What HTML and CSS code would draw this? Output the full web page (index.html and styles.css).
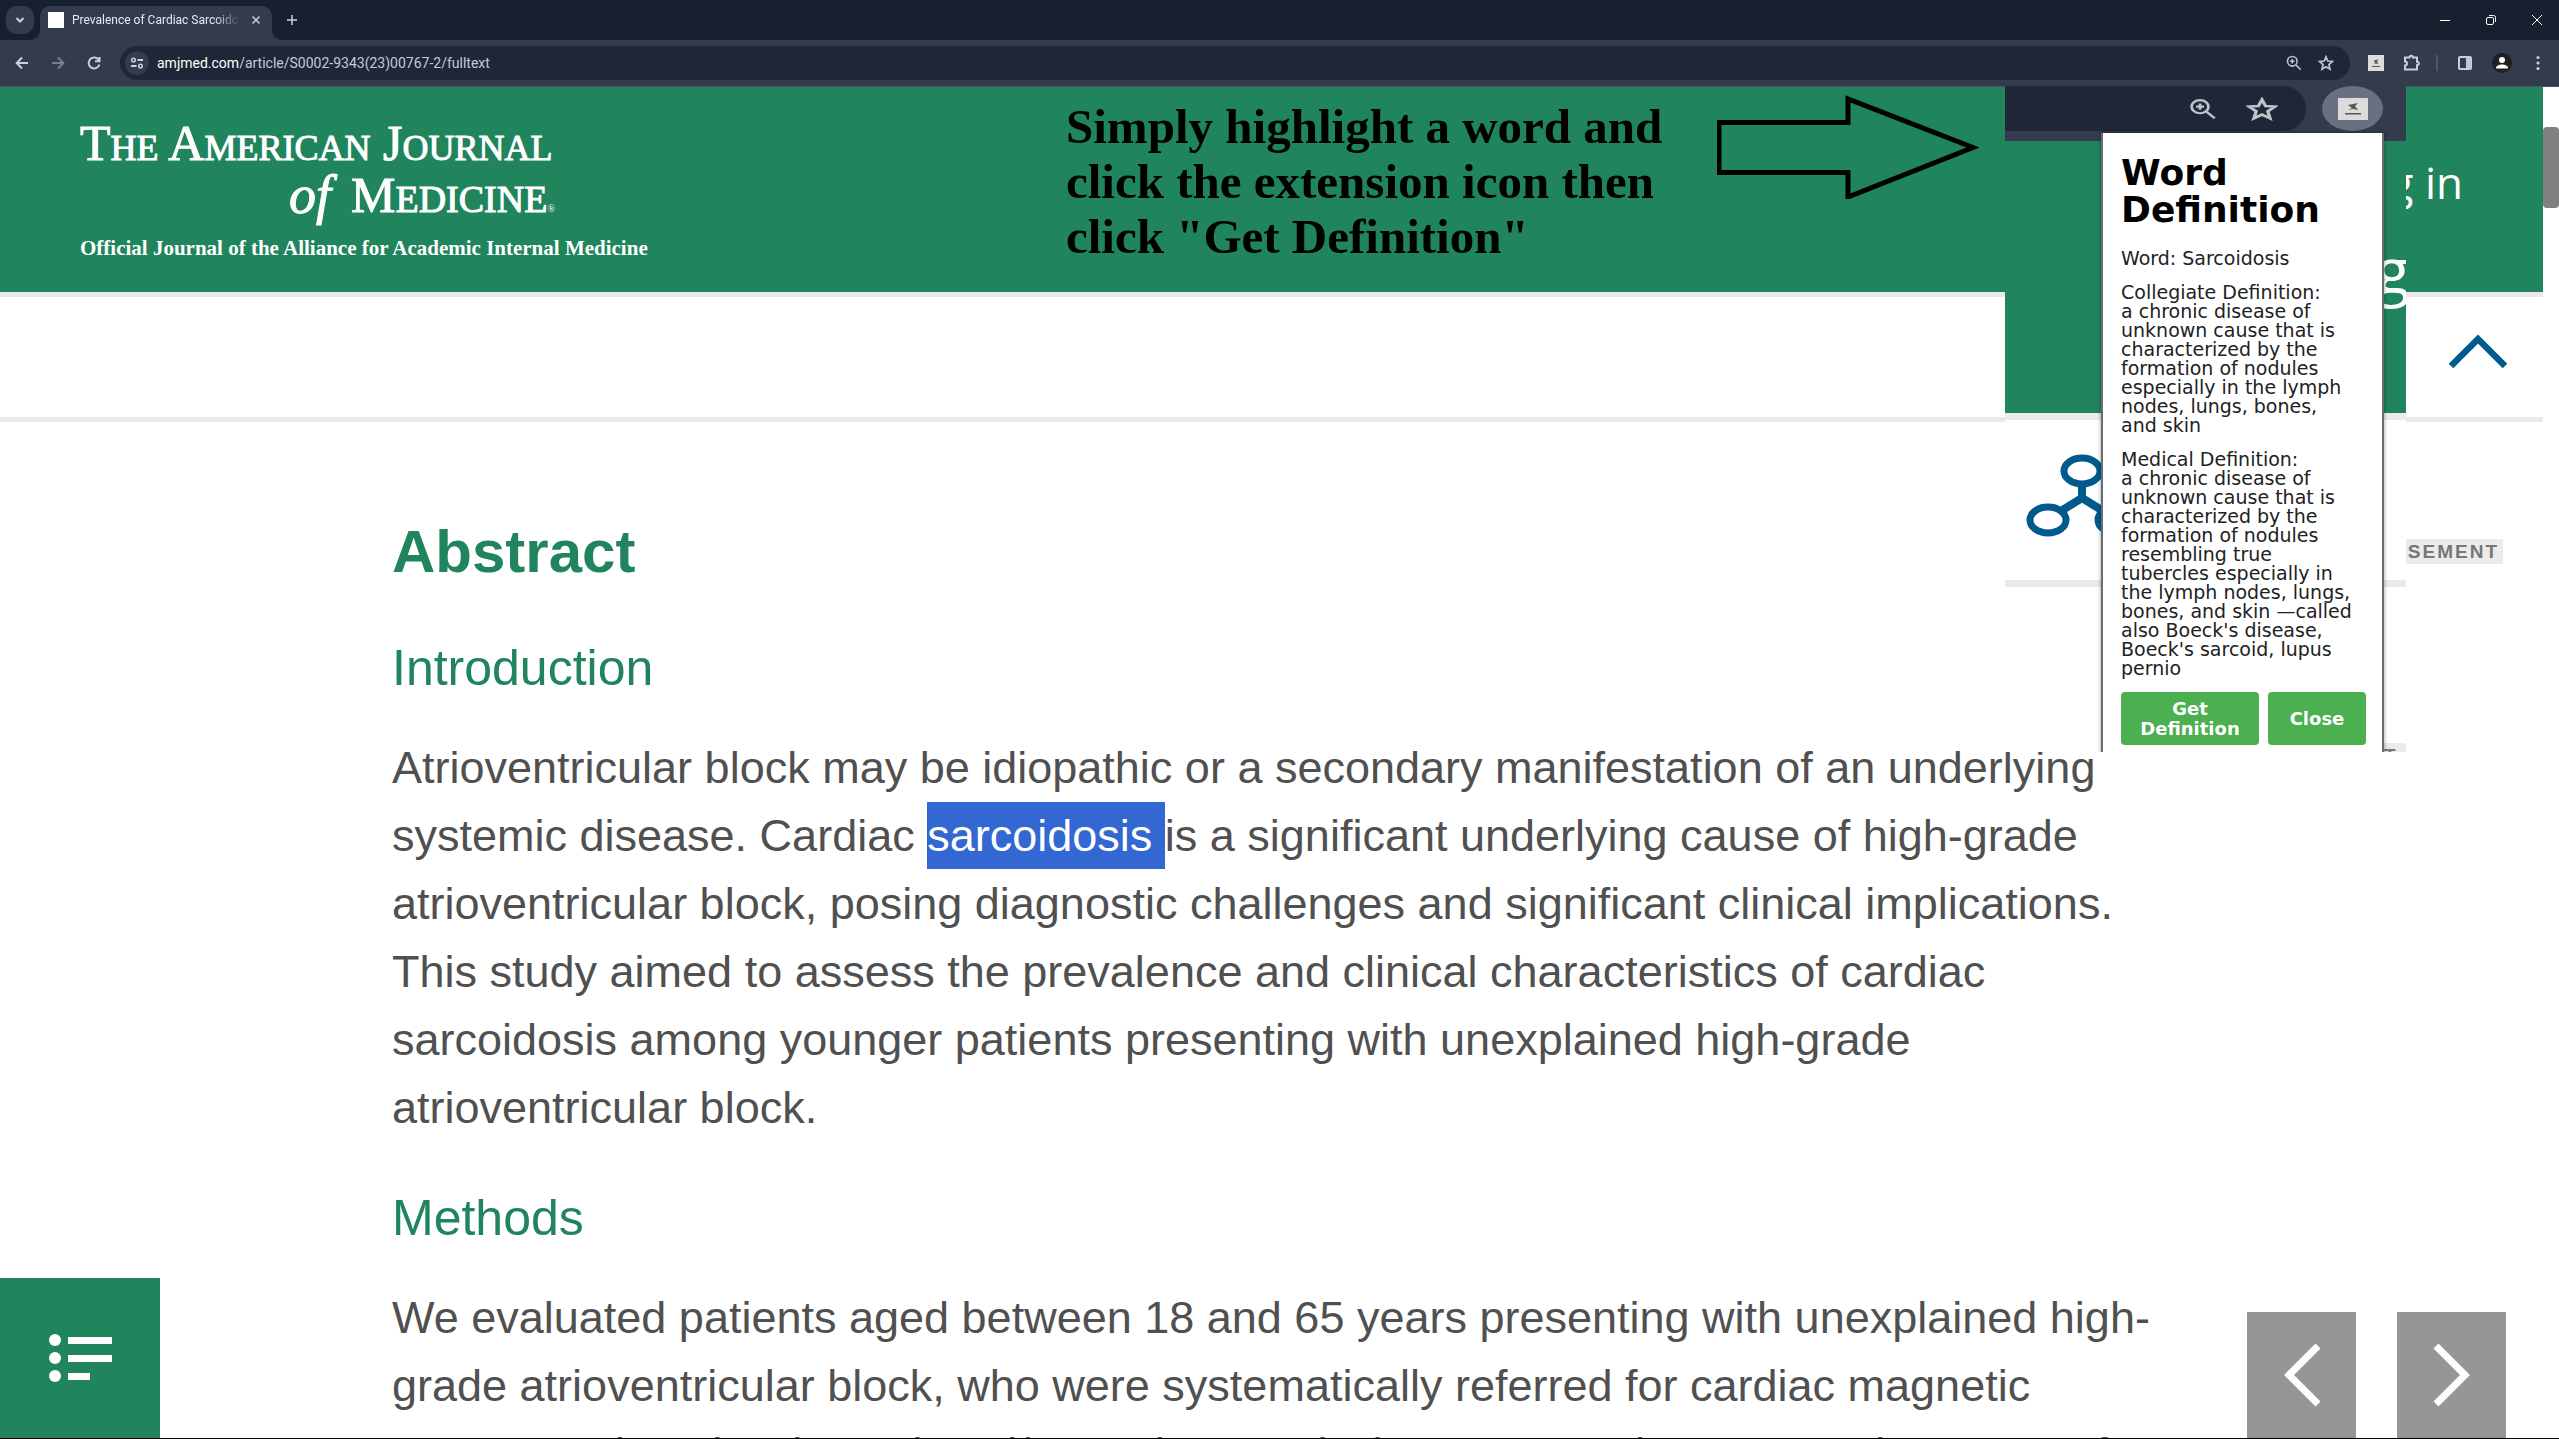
FILE: index.html
```html
<!DOCTYPE html>
<html lang="en">
<head>
<meta charset="utf-8">
<title>Prevalence of Cardiac Sarcoidosis</title>
<link rel="stylesheet" href="styles.css">
</head>
<body>
<div class="browser">
  <div class="tabstrip">
    <button class="tab-search" aria-label="Search tabs"><svg width="12" height="12" viewBox="0 0 12 12"><path d="M2.5 4 6 7.5 9.500 4" class="ln w2"/></svg></button>
    <div class="tab">
      <span class="favicon"></span>
      <span class="tab-title">Prevalence of Cardiac Sarcoidos</span>
      <button class="plain" aria-label="Close tab"><svg width="12" height="12" viewBox="0 0 12 12"><path d="M2.500 2.500l7 7M9.500 2.500l-7 7" class="ln"/></svg></button>
    </div>
    <button class="plain new-tab" aria-label="New tab"><svg width="12" height="12" viewBox="0 0 12 12"><path d="M6 1v10M1 6h10" class="ln"/></svg></button>
    <div class="window-controls">
      <button class="plain" aria-label="Minimize"><svg width="12" height="12" viewBox="0 0 12 12"><path d="M1 6.500h10" class="wn"/></svg></button>
      <button class="plain" aria-label="Restore"><svg width="12" height="12" viewBox="0 0 12 12"><rect x="1.500" y="3.500" width="7" height="7" rx="1.500" class="wn"/><path d="M4 1.500h4.500a2 2 0 0 1 2 2V8" class="wn"/></svg></button>
      <button class="plain" aria-label="Close window"><svg width="12" height="12" viewBox="0 0 12 12"><path d="M1 1l10 10M11 1 1 11" class="wn"/></svg></button>
    </div>
  </div>
  <div class="toolbar">
    <div class="nav-buttons">
      <button class="plain" aria-label="Back"><svg width="14" height="14" viewBox="0 0 14 14"><path d="M13 7H2M7 1.500 1.700 7 7 12.500" class="ln w2"/></svg></button>
      <button class="plain dim" aria-label="Forward"><svg width="14" height="14" viewBox="0 0 14 14"><path d="M1 7h11M7 1.500 12.300 7 7 12.500" class="ln w2"/></svg></button>
      <button class="plain" aria-label="Reload"><svg width="14" height="14" viewBox="0 0 14 14"><path d="M12 4.200A5.500 5.500 0 1 0 12.500 8.500M12.500 1v4.200H8" class="ln w2"/></svg></button>
    </div>
    <div class="omnibox">
      <button class="site-info" aria-label="Site information"><svg width="14" height="12" viewBox="0 0 14 12"><circle cx="3.500" cy="3" r="1.800" class="ln"/><path d="M7.500 3H13M1 9h5.500" class="ln w2"/><circle cx="10.500" cy="9" r="1.800" class="ln"/></svg></button>
      <span class="url"><b>amjmed.com</b>/article/S0002-9343(23)00767-2/fulltext</span>
      <button class="plain" aria-label="Zoom"><svg width="16" height="16" viewBox="0 0 16 16"><use href="#zoom"/></svg></button>
      <button class="plain" aria-label="Bookmark"><svg width="16" height="16" viewBox="0 0 16 16"><use href="#star"/></svg></button>
    </div>
    <div class="actions">
      <button class="plain" aria-label="Word Definition extension"><svg width="16" height="16" viewBox="0 0 16 16"><use href="#ext"/></svg></button>
      <button class="plain" aria-label="Extensions"><svg width="18" height="18" viewBox="0 0 18 18"><path d="M2 3.500h4.500a1.700 1.700 0 0 1 3.400 0H14v4.300a1.700 1.700 0 0 1 0 3.400V15.500H2v-4a2 2 0 0 0 0-4z" class="ln w2"/></svg></button>
      <i class="divider"></i>
      <button class="plain" aria-label="Side panel"><svg width="16" height="16" viewBox="0 0 16 16"><rect x="2" y="2" width="12" height="12" rx="1" class="ln w2"/><path d="M9 2h5v12H9z" fill="#bfc7df"/></svg></button>
      <button class="plain" aria-label="Profile"><svg width="20" height="20" viewBox="0 0 20 20"><circle cx="10" cy="10" r="10" fill="#1f1f1f"/><circle cx="10" cy="7" r="3" fill="#fff"/><path d="M4 15.500c0-3 3-4 6-4s6 1 6 4z" fill="#fff"/></svg></button>
      <button class="plain menu" aria-label="Menu"><svg width="6" height="16" viewBox="0 0 6 16" fill="#c9cfe0"><circle cx="3" cy="2.500" r="1.600"/><circle cx="3" cy="8" r="1.600"/><circle cx="3" cy="13.500" r="1.600"/></svg></button>
    </div>
  </div>

  <div class="viewport">
    <main class="page">
      <header class="masthead">
        <div class="brand">
          <div class="brand-line">T<small>HE</small> A<small>MERICAN</small> J<small>OURNAL</small></div>
          <div class="brand-line second"><em>of</em> <span>M<small>EDICINE</small><sup>®</sup></span></div>
          <div class="brand-sub">Official Journal of the Alliance for Academic Internal Medicine</div>
        </div>
        <p class="callout">Simply highlight a word and<br>click the extension icon then<br>click "Get Definition"</p>
        <svg class="arrow" width="262" height="104" viewBox="0 0 262 104"><path d="M2 27.500H131V4L256 52.500 131 102V77.500H2z" fill="none" stroke="#000" stroke-width="5"/></svg>
        <a class="login" href="#">g in</a>
      </header>
      <div class="subbar">
        <button class="plain" aria-label="Collapse"><svg width="60" height="36" viewBox="0 0 60 36"><path d="M3 33 30 6l27 27" fill="none" stroke="#005a8e" stroke-width="6.500"/></svg></button>
      </div>
      <article class="article">
        <h1>Abstract</h1>
        <h2>Introduction</h2>
        <p>Atrioventricular block may be idiopathic or a secondary manifestation of an underlying systemic disease. Cardiac <mark>sarcoidosis </mark>is a significant underlying cause of high-grade atrioventricular block, posing diagnostic challenges and significant clinical implications. This study aimed to assess the prevalence and clinical characteristics of cardiac sarcoidosis among younger patients presenting with unexplained high-grade atrioventricular block.</p>
        <h2>Methods</h2>
        <p>We evaluated patients aged between 18 and 65 years presenting with unexplained high-grade atrioventricular block, who were systematically referred for cardiac magnetic resonance imaging (CMRI) and/or positron emission tomography was used to screen for</p>
      </article>
      <span class="ad-label">SEMENT</span>
      <button class="outline-btn" aria-label="Article outline"><svg width="66" height="52" viewBox="0 0 66 52" fill="#fff"><circle cx="8" cy="8" r="6"/><circle cx="8" cy="26" r="6"/><circle cx="8" cy="44" r="6"/><path d="M21 5h44v7H21zM21 23h44v7H21zM21 41h22v7H21z"/></svg></button>
      <div class="pager">
        <button aria-label="Previous article"><svg width="38" height="64" viewBox="0 0 38 64"><path d="M35 3 6 32l29 29"/></svg></button>
        <button aria-label="Next article"><svg width="38" height="64" viewBox="0 0 38 64"><path d="M3 3l29 29L3 61"/></svg></button>
      </div>
    </main>
    <div class="scrollbar"><div class="thumb"></div></div>

    <section class="inset">
      <div class="inset-bar">
        <div class="inset-omni">
          <svg width="28" height="22" viewBox="0 0 16 16" preserveAspectRatio="none"><use href="#zoom"/></svg>
          <svg width="32" height="24" viewBox="0 0 16 16" preserveAspectRatio="none"><use href="#star"/></svg>
        </div>
        <div class="inset-ext"><svg width="30" height="22" viewBox="0 0 30 22"><path d="M0 0h30v22H0z" fill="#dcdcdc"/><path d="M10 7l5-1 5-1-3 3 3 4-5-1-5 1 4-2zM7 15h16v1.500H7z" fill="#555"/></svg></div>
      </div>
      <div class="inset-green"><span>g</span></div>
      <div class="inset-row">
        <svg width="120" height="90" viewBox="0 0 120 90" fill="none" stroke="#005a8e"><path d="M58 31v16M58 45 37 58M58 45l21 13" stroke-width="8"/><g stroke-width="7"><ellipse cx="58" cy="18" rx="18" ry="13" fill="#fff"/><ellipse cx="24" cy="67" rx="18" ry="13" fill="#fff"/><ellipse cx="92" cy="67" rx="18" ry="13" fill="#fff"/></g></svg>
      </div>
      <div class="inset-rest"><span>T</span></div>
      <div class="popup">
        <h3>Word Definition</h3>
        <p>Word: Sarcoidosis</p>
        <p>Collegiate Definition:<br>a chronic disease of<br>unknown cause that is<br>characterized by the<br>formation of nodules<br>especially in the lymph<br>nodes, lungs, bones,<br>and skin</p>
        <p class="medical">Medical Definition:<br>a chronic disease of<br>unknown cause that is<br>characterized by the<br>formation of nodules<br>resembling true<br>tubercles especially in<br>the lymph nodes, lungs,<br>bones, and skin —called<br>also Boeck's disease,<br>Boeck's sarcoid, lupus<br>pernio</p>
        <div class="popup-buttons"><button class="get">Get Definition</button><button class="close">Close</button></div>
      </div>
    </section>
  </div>
</div>
<svg class="defs" width="0" height="0">
  <symbol id="zoom" viewBox="0 0 16 16" preserveAspectRatio="none"><circle cx="6.300" cy="6.300" r="4.800" fill="none" stroke="#c0c3c9" stroke-width="1.600"/><path d="M10 10l4.700 4.700M6.300 4v4.600M4 6.300h4.600" fill="none" stroke="#c0c3c9" stroke-width="1.600"/></symbol>
  <symbol id="star" viewBox="0 0 16 16" preserveAspectRatio="none"><path d="M8 1.800 9.800 6l4.700.4-3.600 3.100 1.100 4.700L8 11.700l-4 2.500 1.100-4.700L1.500 6.400 6.200 6z" fill="none" stroke="#c0c3c9" stroke-width="1.700"/></symbol>
  <symbol id="ext" viewBox="0 0 16 16"><path d="M0 0h16v16H0z" fill="#dcdcdc"/><path d="M5.500 5.500l2.500-.5 2.500-.5-1.500 2 1.500 2.500-2.500-.5-2.500.5 1.800-1.500zM4 11h8v1H4z" fill="#555"/></symbol>
</svg>
</body>
</html>
```
FILE: styles.css
```css
* { box-sizing: border-box; }
body { margin: 0; background: #fff; font-family: "Liberation Sans", Arial, sans-serif; }
button { font: inherit; border: 0; padding: 0; cursor: pointer; }
h1, h2, h3, p { margin: 0; }
svg { display: block; }
.defs { position: absolute; }
.ln { fill: none; stroke: #c9cfe0; stroke-width: 1.500; }
.w2 { stroke-width: 2; }
.wn { fill: none; stroke: #fff; stroke-width: 1; }
.plain { background: none; display: flex; align-items: center; justify-content: center; flex: none; }
.dim { opacity: .45; }

.browser { height: 100vh; display: flex; flex-direction: column; overflow: hidden; border-bottom: 1px solid #000; }

.tabstrip { height: 40px; flex: none; background: #18202f; display: flex; align-items: center; padding-left: 6px; }
.tab-search { width: 28px; height: 28px; border-radius: 10px; background: #333b4c; display: flex; align-items: center; justify-content: center; }
.tab { position: relative; align-self: flex-end; margin-left: 6px; width: 232px; height: 34px; border-radius: 10px 10px 0 0; background: #333b4c; display: flex; align-items: center; padding: 0 10px 6px 8px; }
.tab::before, .tab::after { content: ""; position: absolute; bottom: 0; width: 10px; height: 10px; }
.tab::before { right: 100%; background: radial-gradient(circle at 0 0, #18202f 10px, #333b4c 10px); }
.tab::after { left: 100%; background: radial-gradient(circle at 100% 0, #18202f 10px, #333b4c 10px); }
.favicon { width: 16px; height: 16px; background: #fff; }
.tab-title { flex: 1; margin: 0 10px 0 8px; font: 12px/16px Roboto, sans-serif; white-space: nowrap; overflow: hidden; color: #e6e9f2; -webkit-mask-image: linear-gradient(90deg, #000 85%, transparent); mask-image: linear-gradient(90deg, #000 85%, transparent); }
.new-tab { margin-left: 14px; }
.window-controls { margin-left: auto; display: flex; gap: 34px; padding-right: 16px; }

.toolbar { height: 47px; flex: none; background: #333b4c; border-bottom: 1px solid #50535a; display: flex; align-items: center; }
.nav-buttons { display: flex; gap: 22px; padding: 0 19px 0 15px; }
.omnibox { flex: 1; height: 34px; border-radius: 17px; background: #1e2637; display: flex; align-items: center; gap: 16px; padding: 0 16px 0 5px; }
.site-info { width: 24px; height: 24px; border-radius: 12px; background: #333b4c; display: flex; align-items: center; justify-content: center; }
.url { flex: 1; margin-left: -8px; font: 14px/18px Roboto, sans-serif; color: #c6cad3; }
.url b { font-weight: 400; color: #fff; }
.actions { display: flex; align-items: center; gap: 19px; padding: 0 18px; }
.divider { width: 2px; height: 16px; margin-left: -4px; background: #4d5568; }
.menu { margin-left: 4px; }

.viewport { position: relative; flex: 1; min-height: 0; display: flex; }
.page { position: relative; flex: 1; overflow: hidden; }
.scrollbar { width: 16px; padding-top: 40px; background: #fff; }
.thumb { height: 81px; border-radius: 4px; background: #808080; }

.masthead { height: 210px; background: #20845d; border-bottom: 5px solid #e9e9e9; display: flex; align-items: flex-start; padding: 0 80px; color: #fff; }
.brand { width: 986px; padding-top: 31px; font-family: "Liberation Serif", serif; }
.brand-line { width: 475px; font-size: 50px; line-height: 50px; white-space: nowrap; -webkit-text-stroke: 1px #fff; }
.brand-line small { font-size: 36px; }
.second { display: flex; justify-content: flex-end; gap: 20px; line-height: 44px; }
.second em { font-size: 54px; }
.second small { font-size: 38px; }
.second sup { font-size: 10px; line-height: 10px; vertical-align: baseline; -webkit-text-stroke: 0; }
.brand-sub { font-size: 21px; line-height: 24px; margin-top: 15px; font-weight: 700; }
.callout { width: 651px; padding-top: 12px; color: #000; font: 700 49px/55px "Liberation Serif", serif; white-space: nowrap; }
.arrow { flex: none; margin-top: 8px; }
.login { margin-left: auto; padding-top: 65px; font: 44px/60px "Open Sans", sans-serif; color: #fff; text-decoration: none; }

.subbar { height: 125px; border-bottom: 5px solid #e9e9e9; display: flex; justify-content: flex-end; align-items: center; padding: 0 35px 12px; }

.article { max-width: 2176px; padding: 96px 4px 0 392px; color: #505050; }
.article h1 { font-size: 60px; line-height: 68px; color: #20845d; padding-bottom: 6px; }
.article h2 { font-size: 50px; line-height: 60px; font-weight: 400; color: #20845d; margin: 46px 0 36px; }
.article p { font-size: 45px; line-height: 68px; }
.article mark { background: #3367d1; color: #fff; padding: 8px 0; }

.ad-label { position: absolute; right: 40px; top: 452px; padding: 0 4px 0 2px; background: #ebebeb; color: #777; font-size: 19px; line-height: 25px; font-weight: 700; letter-spacing: 2px; }
.outline-btn { position: absolute; left: 0; bottom: 0; width: 160px; height: 160px; background: #20845d; display: flex; align-items: center; justify-content: center; }
.pager { position: absolute; right: 37px; bottom: 0; display: flex; gap: 41px; }
.pager button { width: 109px; height: 126px; background: #969696; display: flex; align-items: center; justify-content: center; }
.pager path { fill: none; stroke: #fff; stroke-width: 7; }

.inset { position: absolute; right: 153px; top: -1px; width: 401px; height: 666px; overflow: hidden; background: #fff; }
.inset-bar { height: 55px; background: #333b4c; display: flex; }
.inset-omni { width: 301px; height: 45px; border-radius: 0 26px 26px 0; background: #1e2637; display: flex; align-items: center; justify-content: flex-end; gap: 29px; padding-right: 28px; }
.inset-ext { margin-left: 16px; width: 61px; height: 45px; border-radius: 50%; background: #697180; display: flex; align-items: center; justify-content: center; }
.inset-green { height: 272px; background: #20845d; color: #fff; text-align: right; font: 64px/87px "Open Sans", sans-serif; padding-top: 85px; }
.inset-green span { margin-right: -4px; }
.inset-row { height: 174px; border-top: 7px solid #ebebeb; border-bottom: 7px solid #ebebeb; padding: 33px 0 0 19px; }
.inset-rest { display: flex; justify-content: flex-end; padding-top: 156px; }
.inset-rest span { width: 22px; background: #ebebeb; color: #777; font-size: 19px; line-height: 25px; font-weight: 700; }
.popup { position: absolute; left: 96px; top: 47px; width: 283px; height: 640px; padding: 21px 16px 0 18px; background: #fff; border: solid #6b6b70; border-width: 0 2px; box-shadow: 0 0 4px #0006; color: #222; font: 19px/19px "DejaVu Sans", sans-serif; white-space: nowrap; }
.popup h3 { font-size: 36px; line-height: 37px; color: #000; white-space: normal; margin-bottom: 21px; }
.popup p { margin-bottom: 15px; }
.popup .medical { margin: 0 0 14px; }
.popup-buttons { display: flex; gap: 9px; }
.popup-buttons button { height: 53px; border-radius: 4px; background: #4caf50; color: #fff; font-size: 18px; font-weight: 700; line-height: 20px; white-space: normal; }
.get { width: 138px; }
.close { width: 98px; }
```
